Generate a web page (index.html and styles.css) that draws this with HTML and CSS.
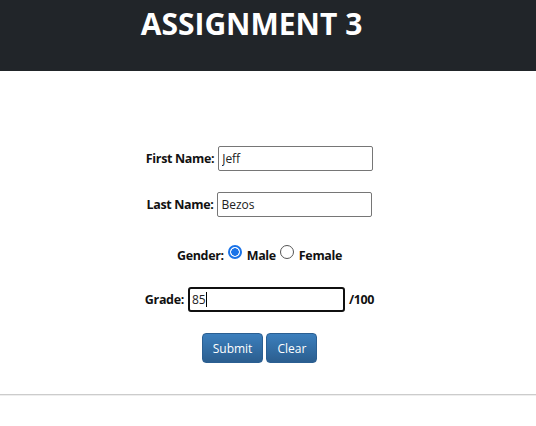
FILE: index.html
```html
<!DOCTYPE html>
<html>
<head>
<meta charset="utf-8">
<link rel="stylesheet" href="styles.css">
</head>
<body>
<header class="top">
  <h1 class="title">ASSIGNMENT 3</h1>
</header>
<main class="content">
  <form class="form">
    <div class="row"><label class="lbl">First Name:</label><input class="field" type="text" value="Jeff"></div>
    <div class="row"><label class="lbl">Last Name:</label><input class="field" type="text" value="Bezos"></div>
    <div class="row gender"><label class="lbl">Gender:</label>
      <span class="radio on"></span><span class="lbl">Male</span>
      <span class="radio"></span><span class="lbl">Female</span></div>
    <div class="row"><label class="lbl">Grade:</label><span class="field focus">85<span class="caret"></span></span><span class="lbl">/100</span></div>
    <div class="row btns"><button type="button" class="btn">Submit</button><button type="button" class="btn">Clear</button></div>
  </form>
</main>
<hr class="rule">
</body>
</html>
```
FILE: styles.css
```css
html, body { margin: 0; padding: 0; background: #fff; }
body { font-family: "Open Sans", "Noto Sans", sans-serif; color: #212529; width: 536px; }
.top { background: #212529; height: 71px; padding-right: 33px; }
.title { margin: 0; text-align: center; color: #fff; font-size: 30px; font-weight: 700; line-height: 48px; letter-spacing: 0; }
.content { padding: 75px 17px 0 0; }
.form { display: flex; flex-direction: column; align-items: center; }
.row { display: flex; align-items: center; height: 25px; margin-bottom: 21px; }
.row.gender { margin-top: 2px; margin-bottom: 23px; align-items: flex-end; height: 24px; }
.lbl { font-size: 12.5px; font-weight: 700; color: #111; letter-spacing: -0.35px; }
.row .lbl + .field { margin-left: 4px; }
.field { box-sizing: border-box; width: 155px; height: 25px; border: 1px solid #767676; border-radius: 2px; padding: 0 3px; font: 12px "Open Sans", sans-serif; color: #222; outline: none; display: flex; align-items: center; }
.field.focus { width: 157px; border: 2px solid #101010; border-radius: 3px; padding: 0 2px; margin-right: 4px; }
.caret { display: inline-block; width: 1px; height: 15px; background: #000; }
.radio { box-sizing: border-box; width: 14px; height: 14px; border-radius: 50%; border: 1px solid #555; margin: 0 5px 5px 4px; background: #fff; }
.radio.on { border: 2px solid #1a73e8; background: radial-gradient(circle, #1a73e8 0 3.5px, #fff 4px); }
.btns { height: 30px; gap: 3px; }
.btn { height: 30px; padding: 0 10px; border: 1px solid #2b5f92; border-radius: 4px; color: #fff; font: 12px "Open Sans", sans-serif; background: linear-gradient(#3c7fbd, #2b5e8f); }
.rule { margin: 10px 0 0; border: 0; border-top: 1px solid #ccc; border-bottom: 1px solid #eee; }
```
